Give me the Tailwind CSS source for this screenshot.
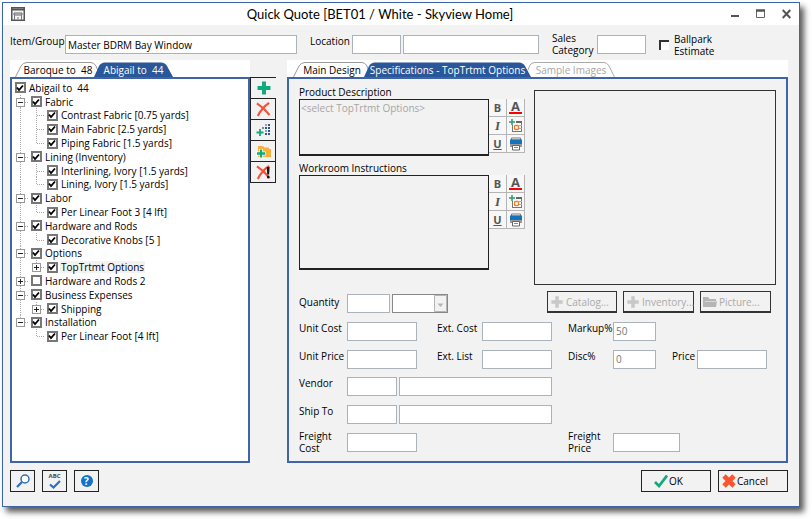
<!DOCTYPE html>
<html lang="en">
<head>
<meta charset="utf-8">
<title>Quick Quote</title>
<script src="https://cdn.jsdelivr.net/npm/@tailwindcss/browser@4"></script>
</head>
<body class="flex min-h-screen bg-white pt-[2px] pr-3 pb-3 pl-[2px] font-['Open_Sans','Noto_Sans',sans-serif] text-[10px] leading-3 text-black">
<svg class="hidden">
  <symbol id="plus" viewBox="0 0 16 16"><path d="M6 1.500h4V6h4.500v4H10v4.500H6V10H1.500V6H6z" fill="currentColor"/></symbol>
  <symbol id="cross" viewBox="0 0 16 16"><path d="M1 1.500C5 4 11 9.500 14.500 14M14 1C9.500 4 4.500 9.500 2 15" fill="none" stroke="#f4513b" stroke-width="2.300"/></symbol>
  <symbol id="table-add" viewBox="0 0 14 14"><path d="M3 5h10v8H3z" fill="#fff"/><path d="M7 2h6v2H7z" fill="#666"/><path d="M3.500 6v7M3 12.500h10M12.500 4v9" fill="none" stroke="#777"/><path d="M10 6.500h3M10 9.500h3" stroke="#aaa"/><path d="M3 0v6M0 3h6" stroke="#2e9c6c" stroke-width="1.500"/><rect x="5.500" y="6.500" width="4" height="4" rx="1" fill="#fff" stroke="#ee7b28" stroke-width="1.300"/></symbol>
  <symbol id="printer" viewBox="0 0 14 14"><path d="M2.500 1h9v2h-9z" fill="#fff" stroke="#777"/><path d="M1 2.500h12v4.500H1z" fill="#1173bd"/><path d="M1 7h12v3H1z" fill="#999"/><path d="M3.500 8.500h7v4.500h-7z" fill="#fff" stroke="#666"/><path d="M5 10.500h4" stroke="#888"/></symbol>
</svg>

<div class="flex min-w-0 flex-1 flex-col border border-[#3c66a8] bg-[#f2f2f2] shadow-[4px_5px_6px_rgba(0,0,0,0.65)]">
  <header class="flex h-[22px] shrink-0 items-center bg-white pr-2 pl-2">
    <svg class="h-[14px] w-[14px] shrink-0" viewBox="0 0 14 14"><path d="M.75.75h12.500v12.500H.75z" fill="#f4f4f4" stroke="#555" stroke-width="1.500"/><path d="M1 2.500h12" stroke="#555" stroke-width="2"/><path d="M3 6h8v2H3z" fill="#ddd" stroke="#666"/><path d="M3.500 8v5M10.500 8v5M6 11h2" stroke="#777"/></svg>
    <h1 class="flex-1 pl-1 text-center font-['Lato',sans-serif] text-[13px] leading-[22px] whitespace-nowrap">Quick Quote [BET01 / White - Skyview Home]</h1>
    <div class="flex items-center gap-[17px]">
      <button aria-label="Minimize" class="h-[10px] w-2"><svg class="h-[10px] w-2" viewBox="0 0 8 10"><path d="M0 7h8" stroke="#555" stroke-width="2"/></svg></button>
      <button aria-label="Maximize" class="h-[10px] w-[9px]"><svg class="h-[10px] w-[9px]" viewBox="0 0 9 10"><path d="M.5 1.500h8v7h-8z" fill="none" stroke="#666"/><path d="M0 1.500h9" stroke="#555" stroke-width="2.500"/></svg></button>
      <button aria-label="Close" class="h-[10px] w-[9px]"><svg class="h-[10px] w-[9px]" viewBox="0 0 9 10"><path d="M.7 1l7.600 8M8.300 1L.7 9" stroke="#555" stroke-width="2"/></svg></button>
    </div>
  </header>

  <div class="flex shrink-0 pt-[10px] pr-[11px] pl-[7px]">
    <label for="item" class="w-[55px] shrink-0 whitespace-nowrap">Item/Group</label>
    <input id="item" value="Master BDRM Bay Window" class="h-[19px] w-[232px] border border-[#aab2bb] bg-white px-[2px] text-black">
    <label for="loc" class="ml-[13px] w-[42px] shrink-0">Location</label>
    <input id="loc" class="h-[19px] w-[49px] border border-[#aab2bb] bg-white px-[2px]">
    <input aria-label="Location name" class="ml-[2px] h-[19px] w-[136px] border border-[#aab2bb] bg-white px-[2px]">
    <label for="cat" class="-my-[3px] ml-[13px] w-[45px] shrink-0">Sales<br>Category</label>
    <input id="cat" class="h-[19px] w-[49px] border border-[#aab2bb] bg-white px-[2px]">
    <label class="-my-[3px] ml-[13px] flex items-center gap-[5px]"><input type="checkbox" class="h-[10px] w-[10px] appearance-none border-t-2 border-l-2 border-[#333] bg-white checked:bg-[#333]"><span>Ballpark<br>Estimate</span></label>
  </div>

  <main class="mt-[6px] flex min-h-0 flex-1 pr-[11px] pl-[7px]">
    <section class="flex w-[240px] shrink-0 flex-col">
      <div role="tablist" class="flex h-[17px] shrink-0 items-end bg-white pl-[5px]">
        <button role="tab" class="relative h-[15px] w-[86px] whitespace-pre"><svg class="absolute inset-0 h-full w-full" viewBox="0 0 86 15"><path d="M.5 15L6 4Q8 .5 12 .5H76Q79 .5 81 4L85.500 15" fill="#fff" stroke="#999"/></svg><span class="relative">Baroque to  48</span></button>
        <button role="tab" aria-selected="true" class="relative -ml-[7px] h-[15px] w-[79px] whitespace-pre text-white"><svg class="absolute inset-0 h-full w-full" viewBox="0 0 79 15"><path d="M0 15L5 4Q7 .5 11 .5H67Q71 .5 73 4L79 15z" fill="#2a579a"/></svg><span class="relative">Abigail to  44</span></button>
      </div>
      <div class="flex-1 border-2 border-[#3f65a8] bg-white pt-[2px]">
        <ul id="tree" class="grid h-[262px] auto-rows-fr"></ul>
      </div>
    </section>

    <div role="toolbar" aria-label="Item actions" class="mt-[17px] flex w-[26px] shrink-0 flex-col border-t border-[#222]">
      <button aria-label="Add" class="grid h-[21px] place-items-center border-b border-l border-[#222] text-[#12a97d]"><svg class="h-4 w-4"><use href="#plus"/></svg></button>
      <button aria-label="Delete" class="grid h-[21px] place-items-center border-x border-b border-[#222]"><svg class="h-[15px] w-[15px]"><use href="#cross"/></svg></button>
      <button aria-label="Add list" class="grid h-[21px] place-items-center border-x border-b border-[#222]"><svg class="h-[14px] w-[14px]" viewBox="0 0 14 14"><path d="M4 6v7M.5 9.500h7" stroke="#12a97d" stroke-width="1.800"/><path d="M6 4h2v2H6z" fill="#888"/><path d="M9 1h2v2H9zM9 7h2v2H9z" fill="#8aa4c8"/><path d="M12 1h2v2h-2zM9 4h2v2H9zM12 4h2v2h-2zM12 7h2v2h-2zM9 10h2v2H9zM12 10h2v2h-2z" fill="#2a579a"/></svg></button>
      <button aria-label="Add folder" class="grid h-[21px] place-items-center border-x border-b border-[#222]"><svg class="h-[15px] w-[15px]" viewBox="0 0 15 15"><path d="M2 2h5l1.500 1.500H13V5h2v8H2z" fill="#f7b13c"/><path d="M5 5v9M.5 9.500h9" stroke="#fff" stroke-width="4"/><path d="M5 5.500v8M1 9.500h8" stroke="#12a97d" stroke-width="2.400"/></svg></button>
      <button aria-label="Delete all" class="grid h-[21px] place-items-center border-x border-b border-[#222]"><svg class="h-[15px] w-[15px]" viewBox="0 0 16 16"><use href="#cross"/><path d="M11.500 2h3l-.5 8h-2zM11.800 11.500h2.400V14h-2.400z" fill="#111"/></svg></button>
    </div>

    <section class="ml-[11px] flex min-w-0 flex-1 flex-col">
      <div role="tablist" class="flex h-[17px] shrink-0 items-end bg-white pl-[6px]">
        <button role="tab" class="relative h-[15px] w-[78px] whitespace-nowrap"><svg class="absolute inset-0 h-full w-full" viewBox="0 0 78 15"><path d="M.5 15L6 4Q8 .5 12 .5H69Q72 .5 74 4L78 15" fill="#fff" stroke="#999"/></svg><span class="relative">Main Design</span></button>
        <button role="tab" aria-selected="true" class="relative -ml-[7px] h-[15px] w-[167px] whitespace-nowrap text-white"><svg class="absolute inset-0 h-full w-full" viewBox="0 0 167 15"><path d="M0 15L5 4Q7 .5 11 .5H155Q159 .5 161 4L167 15z" fill="#2a579a"/></svg><span class="relative">Specifications - TopTrtmt Options</span></button>
        <button role="tab" class="relative -ml-[4px] h-[15px] w-[88px] whitespace-nowrap text-[#a6a6a6]"><svg class="absolute inset-0 h-full w-full" viewBox="0 0 88 15"><path d="M.5 9L3 3Q4.500 .5 8 .5H77Q80 .5 82 4L87.500 15" fill="#fff" stroke="#aaa"/></svg><span class="relative">Sample Images</span></button>
      </div>
      <div class="flex flex-1 flex-col border-2 border-[#3f65a8] pt-[6px] pr-[10px] pb-[9px] pl-[10px]">
        <div class="flex shrink-0 gap-[9px]">
          <div class="w-[226px] shrink-0">
            <label for="desc" class="block leading-[14px]">Product Description</label>
            <div class="flex items-start">
              <textarea id="desc" placeholder="&lt;select TopTrtmt Options&gt;" class="h-[57px] w-[190px] resize-none border border-b-2 border-[#222] px-px py-[2px] placeholder:text-[#a6a6a6]"></textarea>
              <div class="fmt flex-1"></div>
            </div>
            <label for="work" class="mt-[5px] block leading-[14px]">Workroom Instructions</label>
            <div class="flex items-start">
              <textarea id="work" class="h-[95px] w-[190px] resize-none border border-b-2 border-[#222] px-px py-[2px]"></textarea>
              <div class="fmt flex-1"></div>
            </div>
          </div>
          <div role="img" aria-label="Picture" class="mt-[5px] h-[195px] min-w-0 flex-1 border border-[#333]"></div>
        </div>

        <form class="mt-[6px] flex flex-1 flex-col justify-between">
          <div class="flex items-end">
            <label for="qty" class="w-12 self-center">Quantity</label>
            <input id="qty" class="h-[19px] w-[43px] border border-[#aab2bb] bg-white px-[2px]">
            <div class="relative ml-[2px] h-[19px] w-14">
              <select aria-label="Unit" class="h-full w-full appearance-none border border-[#888] bg-white"><option></option></select>
              <svg class="pointer-events-none absolute top-[1px] right-[1px] h-[17px] w-[13px]" viewBox="0 0 13 17"><path d="M.5.500h12v16H.5z" fill="#f2f2f2" stroke="#b5b5b5"/><path d="M3.500 8.500h6l-3 3.500z" fill="#b5b5b5"/></svg>
            </div>
            <button type="button" class="ml-auto flex h-[22px] w-[70px] items-center gap-[2px] border border-b-2 border-[#333] pl-[2px] text-[#aaa]"><svg class="h-[14px] w-[14px] shrink-0 text-[#c8c8c8]"><use href="#plus"/></svg>Catalog...</button>
            <button type="button" class="ml-[6px] flex h-[22px] w-[71px] items-center gap-[2px] border border-b-2 border-[#333] pl-[2px] text-[#aaa]"><svg class="h-[14px] w-[14px] shrink-0 text-[#c8c8c8]"><use href="#plus"/></svg>Inventory...</button>
            <button type="button" class="mr-[5px] ml-[6px] flex h-[22px] w-[71px] items-center gap-[2px] border border-b-2 border-[#333] pl-[2px] text-[#aaa]"><svg class="h-[14px] w-[14px] shrink-0" viewBox="0 0 14 14"><path d="M0 2h5l1.500 2H13v2h1l-1 6H0z" fill="#b5b5b5"/><path d="M2 6.500h11.500" stroke="#d8d8d8"/></svg>Picture...</button>
          </div>
          <div class="flex">
            <label for="ucost" class="w-12">Unit Cost</label>
            <input id="ucost" class="h-[19px] w-[70px] border border-[#aab2bb] bg-white px-[2px]">
            <label for="ecost" class="ml-5 w-[45px]">Ext. Cost</label>
            <input id="ecost" class="h-[19px] w-[70px] border border-[#aab2bb] bg-white px-[2px]">
            <label for="markup" class="ml-4 w-[45px]">Markup%</label>
            <input id="markup" value="50" class="h-[19px] w-[43px] border border-[#aab2bb] bg-white px-[2px] text-[#777]">
          </div>
          <div class="flex">
            <label for="uprice" class="w-12 whitespace-nowrap">Unit Price</label>
            <input id="uprice" class="h-[19px] w-[70px] border border-[#aab2bb] bg-white px-[2px]">
            <label for="elist" class="ml-5 w-[45px]">Ext. List</label>
            <input id="elist" class="h-[19px] w-[70px] border border-[#aab2bb] bg-white px-[2px]">
            <label for="disc" class="ml-4 w-[45px]">Disc%</label>
            <input id="disc" value="0" class="h-[19px] w-[43px] border border-[#aab2bb] bg-white px-[2px] text-[#777]">
            <label for="price" class="ml-4 w-[25px]">Price</label>
            <input id="price" class="h-[19px] w-[70px] border border-[#aab2bb] bg-white px-[2px]">
          </div>
          <div class="flex">
            <label for="vendor" class="w-12">Vendor</label>
            <input id="vendor" class="h-[19px] w-[50px] border border-[#aab2bb] bg-white px-[2px]">
            <input aria-label="Vendor name" class="ml-[2px] h-[19px] w-[153px] border border-[#aab2bb] bg-white px-[2px]">
          </div>
          <div class="flex">
            <label for="ship" class="w-12">Ship To</label>
            <input id="ship" class="h-[19px] w-[50px] border border-[#aab2bb] bg-white px-[2px]">
            <input aria-label="Ship to name" class="ml-[2px] h-[19px] w-[153px] border border-[#aab2bb] bg-white px-[2px]">
          </div>
          <div class="flex">
            <label for="fcost" class="-my-[3px] w-12">Freight<br>Cost</label>
            <input id="fcost" class="h-[19px] w-[70px] border border-[#aab2bb] bg-white px-[2px]">
            <label for="fprice" class="-my-[3px] ml-[151px] w-[45px]">Freight<br>Price</label>
            <input id="fprice" class="h-[19px] w-[67px] border border-[#aab2bb] bg-white px-[2px]">
          </div>
        </form>
      </div>
    </section>
  </main>

  <footer class="flex shrink-0 pt-[7px] pr-[11px] pb-[14px] pl-[7px]">
    <button aria-label="Search" class="grid h-[22px] w-[25px] place-items-center border border-[#222]"><svg class="h-[14px] w-[14px]" viewBox="0 0 14 14"><circle cx="9" cy="5" r="4" fill="#fff" stroke="#2f6fbd" stroke-width="1.500"/><path d="M6 8L1 13" stroke="#2f6fbd" stroke-width="2.300"/></svg></button>
    <button aria-label="Spelling" class="ml-[7px] flex h-[22px] w-[25px] flex-col items-center border border-[#222] pt-[2px] text-[6px] leading-[7px] font-bold text-[#444]">ABC<svg class="h-[9px] w-3" viewBox="0 0 12 9"><path d="M1 4.500L4.500 7.500L11 1" fill="none" stroke="#2f6fbd" stroke-width="2.200"/></svg></button>
    <button aria-label="Help" class="ml-[7px] grid h-[22px] w-[25px] place-items-center border border-[#222]"><span class="h-3 w-3 rounded-full bg-[#1173c9] text-[10px] leading-3 font-bold text-white">?</span></button>
    <button class="ml-auto flex h-[22px] w-[70px] items-center border border-[#222] pl-3"><svg class="h-[14px] w-[14px]" viewBox="0 0 14 14"><path d="M1 8L5 12L13 1.500" fill="none" stroke="#12a97d" stroke-width="2.700"/></svg><span class="px-px">OK</span></button>
    <button class="ml-[7px] flex h-[22px] w-[70px] items-center border border-[#222] pl-[3px]"><svg class="h-[14px] w-[14px]" viewBox="0 0 14 14"><path d="M2 2L12 12M12 2L2 12" stroke="#fb5530" stroke-width="4.800"/></svg><span class="px-px">Cancel</span></button>
  </footer>
</div>

<script>
// [depth, label, checked, expander, last child]
const items = [
  [0, 'Abigail to  44', 1, '', 0],
  [1, 'Fabric', 1, '-', 0],
  [2, 'Contrast Fabric [0.75 yards]', 1, '', 0],
  [2, 'Main Fabric [2.5 yards]', 1, '', 0],
  [2, 'Piping Fabric [1.5 yards]', 1, '', 1],
  [1, 'Lining (Inventory)', 1, '-', 0],
  [2, 'Interlining, Ivory [1.5 yards]', 1, '', 0],
  [2, 'Lining, Ivory [1.5 yards]', 1, '', 1],
  [1, 'Labor', 1, '-', 0],
  [2, 'Per Linear Foot 3 [4 lft]', 1, '', 1],
  [1, 'Hardware and Rods', 1, '-', 0],
  [2, 'Decorative Knobs [5 ]', 1, '', 1],
  [1, 'Options', 1, '-', 0],
  [2, 'TopTrtmt Options', 1, '+', 1],
  [1, 'Hardware and Rods 2', 0, '+', 0],
  [1, 'Business Expenses', 1, '-', 0],
  [2, 'Shipping', 1, '+', 1],
  [1, 'Installation', 1, '-', 1],
  [2, 'Per Linear Foot [4 lft]', 1, '', 1]
];
const cell = d => `<svg class="h-[14px] w-4 shrink-0" viewBox="0 0 16 14" shape-rendering="crispEdges">${d}</svg>`;
const dots = d => `<path d="${d}" fill="none" stroke="#aaa" stroke-dasharray="1 1"/>`;
let open = true;
document.getElementById('tree').innerHTML = items.map(([depth, text, on, exp, last]) => {
  let lines = '';
  const box = exp ? `<path d="M4.500 3.500h8v8h-8z" fill="#fff" stroke="#999"/><path d="M6 7.500h5${exp === '+' ? 'M8.500 5v5' : ''}" stroke="#222"/>` : '';
  const branch = cell(dots(last ? 'M8.500 0V7.500H16' : 'M8.500 0V14M9 7.500H16') + box);
  if (depth === 1) { open = !last; lines = branch; }
  if (depth === 2) lines = cell(open ? dots('M8.500 0V14') : '') + branch;
  const sel = text === 'TopTrtmt Options' ? 'bg-[#f2f2f2]' : '';
  return `<li class="flex min-h-0 items-center">${lines}<label class="flex items-center whitespace-pre"><span class="relative grid h-[14px] w-4 place-items-center"><input type="checkbox" ${on ? 'checked' : ''} class="peer h-[11px] w-[11px] appearance-none border-2 border-[#777] bg-white"><svg class="pointer-events-none absolute top-[3px] left-1 hidden h-2 w-2 peer-checked:block" viewBox="0 0 8 8"><path d="M1 3.500L3 6L7 1.500" fill="none" stroke="#000" stroke-width="1.800"/></svg></span><span class="px-px ${sel}">${text}</span></label></li>`;
}).join('');

document.querySelectorAll('.fmt').forEach(el => {
  const b = (name, inner) => `<button type="button" aria-label="${name}" class="grid h-[18px] place-items-center border-r border-b border-[#b5b5b5] bg-[#f7f7f7] text-[11px] font-bold text-[#555]">${inner}</button>`;
  el.innerHTML = `<div class="grid grid-cols-2">` +
    b('Bold', 'B') +
    b('Font color', '<span class="border-b-2 border-[#f00] px-[2px] text-[13px] leading-[11px]">A</span>') +
    b('Italic', '<i class="font-[Liberation_Serif] text-[13px]">I</i>') +
    b('Insert table', '<svg class="h-[14px] w-[14px]"><use href="#table-add"/></svg>') +
    b('Underline', '<u>U</u>') +
    b('Print', '<svg class="h-[14px] w-[14px]"><use href="#printer"/></svg>') + `</div>`;
});
</script>
</body>
</html>
